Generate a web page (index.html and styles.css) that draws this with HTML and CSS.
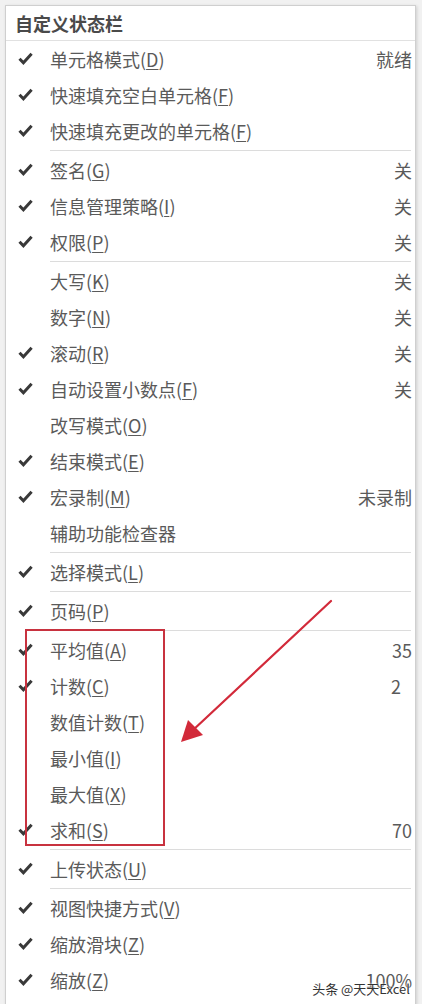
FILE: index.html
```html
<!DOCTYPE html>
<html lang="zh-CN">
<head>
    <meta charset="UTF-8">
    <meta name="viewport" content="width=device-width, initial-scale=1.0">
    <title>自定义状态栏</title>
    <link rel="stylesheet" href="styles.css">
</head>
<body>
    <div class="menu">
        <div class="menu-title">自定义状态栏</div>

        <div class="item checked"><span class="label">单元格模式(<u>D</u>)</span><span class="value">就绪</span></div>
        <div class="item checked"><span class="label">快速填充空白单元格(<u>F</u>)</span></div>
        <div class="item checked"><span class="label">快速填充更改的单元格(<u>F</u>)</span></div>
        <div class="sep"></div>
        <div class="item checked"><span class="label">签名(<u>G</u>)</span><span class="value">关</span></div>
        <div class="item checked"><span class="label">信息管理策略(<u>I</u>)</span><span class="value">关</span></div>
        <div class="item checked"><span class="label">权限(<u>P</u>)</span><span class="value">关</span></div>
        <div class="sep"></div>
        <div class="item"><span class="label">大写(<u>K</u>)</span><span class="value">关</span></div>
        <div class="item"><span class="label">数字(<u>N</u>)</span><span class="value">关</span></div>
        <div class="item checked"><span class="label">滚动(<u>R</u>)</span><span class="value">关</span></div>
        <div class="item checked"><span class="label">自动设置小数点(<u>F</u>)</span><span class="value">关</span></div>
        <div class="item"><span class="label">改写模式(<u>O</u>)</span></div>
        <div class="item checked"><span class="label">结束模式(<u>E</u>)</span></div>
        <div class="item checked"><span class="label">宏录制(<u>M</u>)</span><span class="value">未录制</span></div>
        <div class="item"><span class="label">辅助功能检查器</span></div>
        <div class="sep"></div>
        <div class="item checked"><span class="label">选择模式(<u>L</u>)</span></div>
        <div class="sep"></div>
        <div class="item checked"><span class="label">页码(<u>P</u>)</span></div>
        <div class="sep"></div>
        <div class="item checked"><span class="label">平均值(<u>A</u>)</span><span class="value">35</span></div>
        <div class="item checked"><span class="label">计数(<u>C</u>)</span><span class="value short">2</span></div>
        <div class="item"><span class="label">数值计数(<u>T</u>)</span></div>
        <div class="item"><span class="label">最小值(<u>I</u>)</span></div>
        <div class="item"><span class="label">最大值(<u>X</u>)</span></div>
        <div class="item checked"><span class="label">求和(<u>S</u>)</span><span class="value">70</span></div>
        <div class="sep"></div>
        <div class="item checked"><span class="label">上传状态(<u>U</u>)</span></div>
        <div class="sep"></div>
        <div class="item checked"><span class="label">视图快捷方式(<u>V</u>)</span></div>
        <div class="item checked"><span class="label">缩放滑块(<u>Z</u>)</span></div>
        <div class="item checked"><span class="label">缩放(<u>Z</u>)</span><span class="value">100%</span></div>
    </div>

    <!-- annotation: red box + arrow -->
    <div class="highlight-box"></div>
    <svg class="arrow" width="422" height="1004" viewBox="0 0 422 1004">
        <line x1="331" y1="601" x2="192" y2="731" stroke="#d22a3a" stroke-width="2.2" stroke-linecap="round"/>
        <polygon points="181,742 188,720 203,735" fill="#d22a3a"/>
    </svg>

    <div class="watermark">头条 @天天Excel</div>
</body>
</html>
```
FILE: styles.css
```css
/* Base styles */
body {
    margin: 0;
    padding: 5px 6px 0 5px;
    height: 1004px;
    box-sizing: border-box;
    overflow: hidden;
    background: #f1f1f1;
    font-family: "Noto Sans CJK SC", "Microsoft YaHei", sans-serif;
    position: relative;
}

/* Menu */
.menu {
    background: #fff;
    border: 1px solid #cfcfcf;
    box-shadow: 1px 1px 3px rgba(0, 0, 0, 0.15);
    padding-bottom: 6px;
}

.menu-title {
    height: 34px;
    line-height: 34px;
    padding-left: 9px;
    font-size: 18px;
    font-weight: bold;
    color: #4a4a4a;
    border-bottom: 1px solid #e1e1e1;
}

.item {
    display: flex;
    align-items: center;
    height: 36px;
    padding-left: 44px;
    padding-right: 3px;
    font-size: 18px;
    color: #5a5a5a;
    position: relative;
}

.item.checked::before {
    content: "";
    position: absolute;
    left: 12px;
    top: 11px;
    width: 15px;
    height: 13px;
    background: url("data:image/svg+xml;utf8,<svg xmlns='http://www.w3.org/2000/svg' width='15' height='13' viewBox='0 0 15 13'><path d='M1.5 6.8 L5.4 10.8 L13.6 1.8' fill='none' stroke='%23393939' stroke-width='3'/></svg>") no-repeat center;
}

.item .label {
    flex: 1;
    white-space: nowrap;
}

.item u {
    text-underline-offset: 2px;
    text-decoration-thickness: 1px;
}

.item .value {
    white-space: nowrap;
}

.item .value.short {
    padding-right: 11px;
}

.sep {
    height: 1px;
    margin: 1px 4px 1px 44px;
    background: #dcdcdc;
}

/* Annotation */
.highlight-box {
    position: absolute;
    left: 25px;
    top: 629px;
    width: 136px;
    height: 213px;
    border: 2px solid #c8323f;
}

.arrow {
    position: absolute;
    left: 0;
    top: 0;
}

.watermark {
    position: absolute;
    right: 12px;
    bottom: 6px;
    font-size: 13px;
    color: #333;
    text-shadow: 0 0 2px #fff, 0 0 2px #fff;
}
```
